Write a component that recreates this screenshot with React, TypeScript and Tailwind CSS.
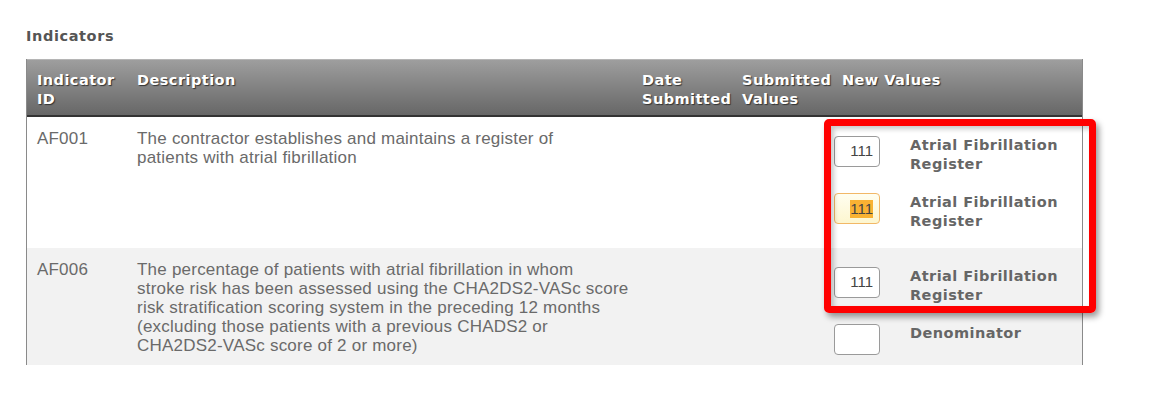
import React from "react";

const head = { fontFamily: '"DejaVu Sans", Verdana, sans-serif' };
const body = { fontFamily: '"Liberation Sans", Tahoma, Arial, sans-serif' };

type Field = { value: string; label: string; focused?: boolean };

// description lines are kept as the source page wraps them
const rows: { id: string; lines: string[]; fields: Field[]; shaded: boolean }[] = [
  {
    id: "AF001",
    lines: ["The contractor establishes and maintains a register of", "patients with atrial fibrillation"],
    fields: [
      { value: "111", label: "Atrial Fibrillation Register" },
      { value: "111", label: "Atrial Fibrillation Register", focused: true },
    ],
    shaded: false,
  },
  {
    id: "AF006",
    lines: [
      "The percentage of patients with atrial fibrillation in whom",
      "stroke risk has been assessed using the CHA2DS2-VASc score",
      "risk stratification scoring system in the preceding 12 months",
      "(excluding those patients with a previous CHADS2 or",
      "CHA2DS2-VASc score of 2 or more)",
    ],
    fields: [
      { value: "111", label: "Atrial Fibrillation Register" },
      { value: "", label: "Denominator" },
    ],
    shaded: true,
  },
];

const cols = "grid grid-cols-[100px_505px_100px_100px_1fr]";

function ValueBox({ field }: { field: Field }) {
  if (field.focused) {
    return (
      <div
        className="flex h-[31px] w-[46px] shrink-0 items-center justify-end rounded-[4px] border border-[#f2b867] bg-gradient-to-b from-[#fffef0] to-[#fdf6cf] pr-[6px] text-[15px] text-[#444]"
        style={body}
      >
        <span className="bg-[#f9b233] leading-[18px]">{field.value}</span>
      </div>
    );
  }
  return (
    <div
      className="flex h-[31px] w-[46px] shrink-0 items-center justify-end rounded-[4px] border border-[#9a9a9a] bg-white pr-[6px] text-[15px] text-[#444]"
      style={body}
    >
      {field.value}
    </div>
  );
}

export default function App() {
  return (
    <div className="relative h-[403px] w-[1150px] overflow-hidden bg-white">
      <div className="pl-[26px] pt-[27px]">
        <h2 className="text-[14.5px] font-bold leading-[19px] tracking-[0.6px] text-[#555]" style={head}>
          Indicators
        </h2>

        <div className="mt-[13px] h-[306px] w-[1057px] overflow-hidden border-x border-[#8a8a8a]">
          <div
            className={`${cols} border-t border-b-2 border-t-[#b5b5b5] border-b-[#333] bg-gradient-to-b from-[#9e9e9e] to-[#676767] pb-[6px] pt-[11px] text-[14.5px] font-bold leading-[19px] tracking-[0.45px] text-white [text-shadow:1px_1px_1px_#333]`}
            style={head}
          >
            <div className="pl-[10px]">Indicator ID</div>
            <div className="pl-[10px]">Description</div>
            <div className="pl-[10px]">Date Submitted</div>
            <div className="pl-[10px]">Submitted Values</div>
            <div className="pl-[10px]">New Values</div>
          </div>

          {rows.map((r) => (
            <div key={r.id} className={`${cols} ${r.shaded ? "bg-[#f2f2f2]" : "bg-white"}`}>
              <div className="pl-[10px] pt-[12px] text-[17px] leading-[19px] tracking-[0.2px] text-[#6a6a6a]" style={body}>
                {r.id}
              </div>
              <div className="pl-[10px] pt-[12px] text-[17px] leading-[19px] tracking-[0.22px] text-[#6a6a6a]" style={body}>
                {r.lines.map((l, i) => (
                  <div key={i} className="whitespace-nowrap">
                    {l}
                  </div>
                ))}
              </div>
              <div />
              <div />
              <div className="flex flex-col gap-[19px] pb-[17px] pl-[2px] pr-[6px] pt-[19px]">
                {r.fields.map((f, i) => (
                  <div key={i} className="flex items-start gap-[30px]">
                    <ValueBox field={f} />
                    <div
                      className="min-h-[38px] text-[14.5px] font-bold leading-[19px] tracking-[0.45px] text-[#666]"
                      style={head}
                    >
                      {f.label}
                    </div>
                  </div>
                ))}
              </div>
            </div>
          ))}
        </div>
      </div>

      {/* callout annotation drawn over the table */}
      <div className="pointer-events-none absolute left-[824px] top-[119px] h-[194px] w-[272px] rounded-[5px] border-[7px] border-[#ff0000] shadow-[3px_4px_6px_rgba(0,0,0,0.4),inset_3px_3px_5px_rgba(0,0,0,0.22)]" />
    </div>
  );
}
